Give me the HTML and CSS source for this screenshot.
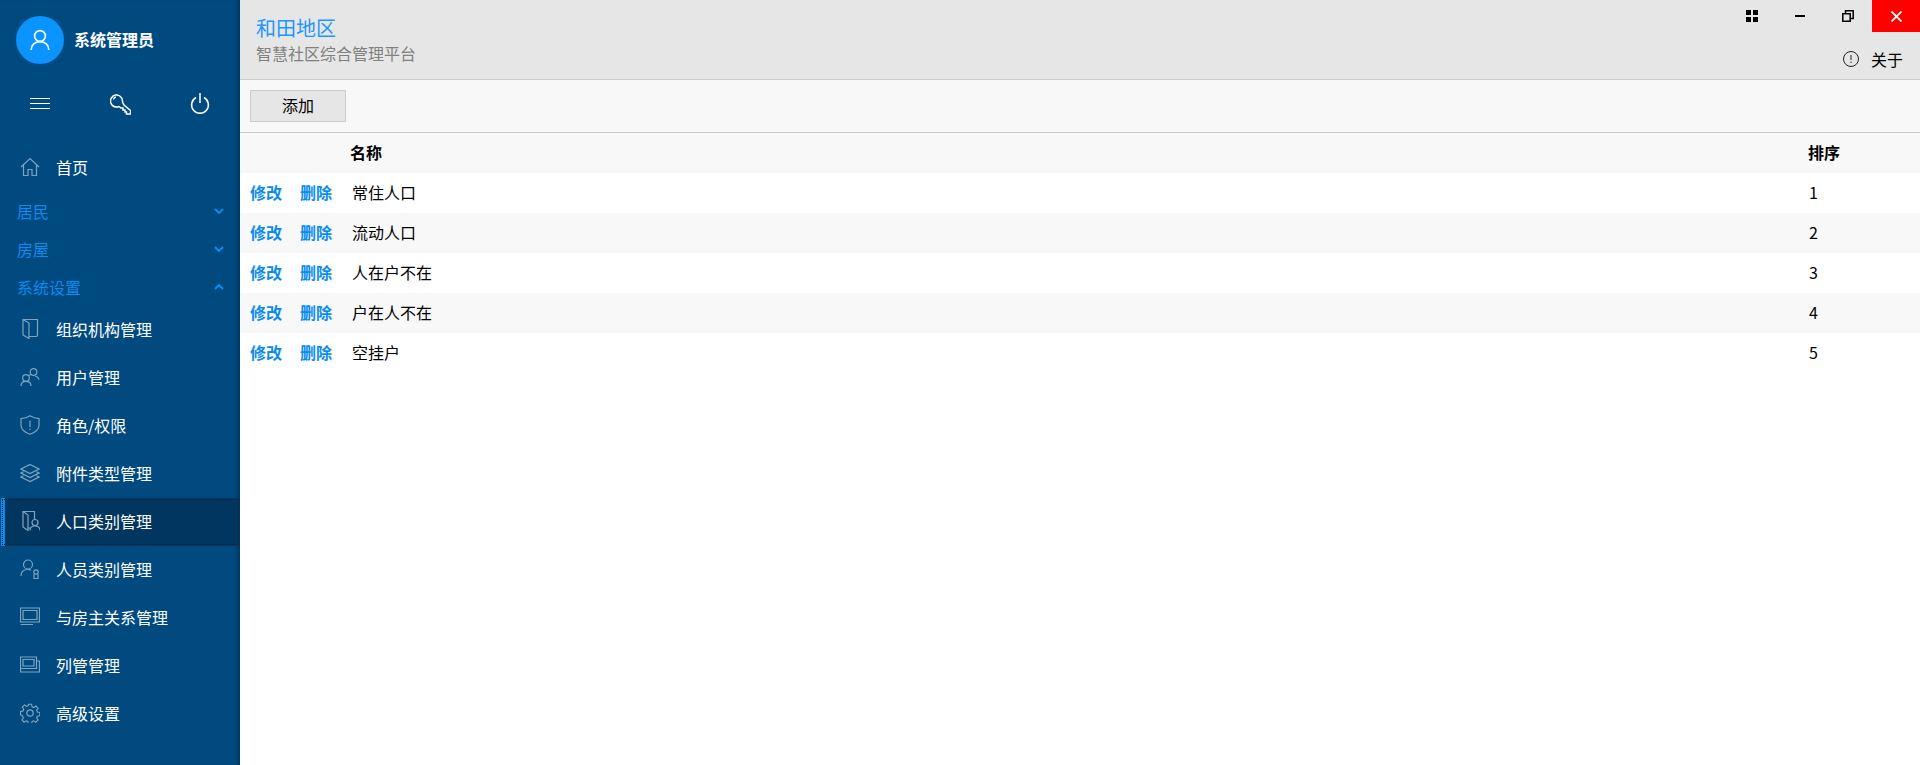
FILE: index.html
```html
<!DOCTYPE html>
<html lang="zh">
<head>
    <meta charset="UTF-8">
    <title>智慧社区综合管理平台</title>
    <link rel="stylesheet" href="styles.css">
</head>
<body>
    <div class="app">
        <aside class="sidebar">
            <div class="user">
                <div class="avatar">
                    <svg width="24" height="24" viewBox="0 0 24 24" fill="none" stroke="#fff" stroke-width="1.6"><circle cx="12" cy="8" r="5.4"/><path d="M3.2 22c0-5 3.6-8.4 8.8-8.4s8.8 3.4 8.8 8.4"/></svg>
                </div>
                <span class="user-name">系统管理员</span>
            </div>
            <div class="quick">
                <button class="quick-btn"><svg width="20" height="12" viewBox="0 0 20 12" stroke="#fff"><path d="M0 .5h20M0 5.5h20M0 10.5h20"/></svg></button>
                <button class="quick-btn"><svg width="21" height="21" viewBox="0 0 21 21" fill="none" stroke="#fff" stroke-width="1.5"><path d="M12.500 7a6 6 0 1 0-3.500 5.500l2 1.500h2v2h2v2h1.500v2h4v-3.500l-6.500-5.500c-.8-1-1.500-2.500-1.500-4z"/><path d="M3.500 5.500a3 3 0 0 1 2.500-2.500"/></svg></button>
                <button class="quick-btn"><svg width="20" height="22" viewBox="0 0 20 22" fill="none" stroke="#fff" stroke-width="1.5"><path d="M6 4.500a8.400 8.400 0 1 0 8 0"/><path d="M10 0v10"/></svg></button>
            </div>
            <nav class="menu">
                <a class="menu-item">
                    <svg class="menu-icon" viewBox="0 0 20 20"><path d="M1 10l9-8.500 9 8.500M3.500 8v10.500h4.500v-6h4v6h4.500V8"/></svg>
                    首页
                </a>
                <div class="menu-group">居民<svg class="chevron" viewBox="0 0 10 6"><path d="M1 1l4 4 4-4"/></svg></div>
                <div class="menu-group">房屋<svg class="chevron" viewBox="0 0 10 6"><path d="M1 1l4 4 4-4"/></svg></div>
                <div class="menu-group">系统设置<svg class="chevron" viewBox="0 0 10 6"><path d="M1 5l4-4 4 4"/></svg></div>
                <a class="menu-item">
                    <svg class="menu-icon" viewBox="0 0 20 20"><path d="M3 .5h14.500v15.500a1.500 1.500 0 0 1-1.500 1.500H9M3 .5v15.500l6 3.500V4L3 .5z"/></svg>
                    组织机构管理
                </a>
                <a class="menu-item">
                    <svg class="menu-icon" viewBox="0 0 20 20"><circle cx="13.500" cy="5" r="3.300"/><circle cx="6" cy="11" r="3.300"/><path d="M1 19c0-2.800 2-4.700 5-4.700s5 1.900 5 4.700M10.500 7.500l-1.500 1M15 9c2 .3 3.500 1.600 4 3.500"/></svg>
                    用户管理
                </a>
                <a class="menu-item">
                    <svg class="menu-icon" viewBox="0 0 20 20"><path d="M10 .8c2.500 1.700 5.500 2.600 9 2.800v6.400c0 4-3.500 7.300-9 9.200C4.500 17.300 1 14 1 10V3.600C4.500 3.400 7.500 2.500 10 .8z"/><path d="M10 5.500v6.500M10 13.500v1.500"/></svg>
                    角色/权限
                </a>
                <a class="menu-item">
                    <svg class="menu-icon" viewBox="0 0 20 20"><path d="M10 1.500l9 4.500-9 4.500L1 6l9-4.500z"/><path d="M3.500 8.800L1 10l9 4.500 9-4.500-2.500-1.200"/><path d="M3.500 12.800L1 14l9 4.500 9-4.500-2.500-1.200"/></svg>
                    附件类型管理
                </a>
                <a class="menu-item menu-item-active">
                    <svg class="menu-icon" viewBox="0 0 20 20"><path d="M3 .5h11.500v8M3 .5v15.500l5 3.500V4L3 .5zM8 17h2"/><circle cx="15" cy="11.500" r="3"/><path d="M10 19.500c0-2.800 2-4.500 5-4.500s5 1.700 5 4.500"/></svg>
                    人口类别管理
                </a>
                <a class="menu-item">
                    <svg class="menu-icon" viewBox="0 0 20 20"><circle cx="8" cy="5.500" r="4.500"/><path d="M1 17c0-4 2.800-6.500 7-6.500 1.200 0 2.200.2 3 .6"/><circle cx="16" cy="13" r="2.200"/><path d="M14 15v4.500h4V15"/></svg>
                    人员类别管理
                </a>
                <a class="menu-item">
                    <svg class="menu-icon" viewBox="0 0 20 20"><path d="M.5 1h19v14H.5zM3 3.500h14v9H3zM.5 17.500H13"/></svg>
                    与房主关系管理
                </a>
                <a class="menu-item">
                    <svg class="menu-icon" viewBox="0 0 20 20"><path d="M.5 2h16v11.500H.5zM3 4.500h11V11H3zM.5 13.500V17h19V6h-3"/></svg>
                    列管管理
                </a>
                <a class="menu-item">
                    <svg class="menu-icon" viewBox="0 0 20 20"><circle cx="10" cy="10" r="3.200"/><path d="M8.300.8h3.400l.5 2.700 1.700.7 2.300-1.500 2.300 2.400-1.500 2.200.7 1.700 2.700.5v3.400l-2.700.5-.7 1.700 1.500 2.300-2.400 2.300-2.200-1.500-1.700.7-.5 2.700H8.300l-.5-2.700-1.700-.7-2.300 1.500-2.300-2.400 1.500-2.200-.7-1.700L0 11.700V8.300l2.700-.5.700-1.700-1.500-2.300 2.400-2.300 2.200 1.500 1.700-.7z" transform="translate(.5 .5) scale(.95)"/></svg>
                    高级设置
                </a>
            </nav>
        </aside>
        <main class="content">
            <header class="top">
                <div class="titles">
                    <div class="region">和田地区</div>
                    <div class="platform">智慧社区综合管理平台</div>
                </div>
                <div class="top-right">
                    <div class="win-btns">
                        <button class="win-btn"><svg width="12" height="12" viewBox="0 0 12 12" fill="#000"><path d="M0 0h5v5H0zM7 0h5v5H7zM0 7h5v5H0zM7 7h5v5H7z"/></svg></button>
                        <button class="win-btn"><svg width="10" height="2" viewBox="0 0 10 2" fill="#000"><path d="M0 0h10v2H0z"/></svg></button>
                        <button class="win-btn"><svg width="12" height="12" viewBox="0 0 12 12" fill="none" stroke="#000" stroke-width="1.500"><path d="M.8 3.800h7.400v7.400H.8zM3.500 3.500V.8h7.700v7.700H8.500"/></svg></button>
                        <button class="win-btn win-close"><svg width="11" height="11" viewBox="0 0 11 11" stroke="#fff" stroke-width="1.800"><path d="M.5.500l10 10M10.500.500l-10 10"/></svg></button>
                    </div>
                    <div class="about">
                        <svg width="16" height="16" viewBox="0 0 16 16" fill="none" stroke="#222"><circle cx="8" cy="8" r="7.500"/><path d="M8 4v5M8 10.500V12"/></svg>
                        <span>关于</span>
                    </div>
                </div>
            </header>
            <div class="toolbar">
                <button class="add-btn">添加</button>
            </div>
            <table class="grid">
                <thead>
                    <tr>
                        <th class="col-actions"></th>
                        <th class="col-name">名称</th>
                        <th class="col-sort">排序</th>
                    </tr>
                </thead>
                <tbody>
                    <tr><td class="actions"><a>修改</a><a>删除</a></td><td class="name">常住人口</td><td class="sort">1</td></tr>
                    <tr><td class="actions"><a>修改</a><a>删除</a></td><td class="name">流动人口</td><td class="sort">2</td></tr>
                    <tr><td class="actions"><a>修改</a><a>删除</a></td><td class="name">人在户不在</td><td class="sort">3</td></tr>
                    <tr><td class="actions"><a>修改</a><a>删除</a></td><td class="name">户在人不在</td><td class="sort">4</td></tr>
                    <tr><td class="actions"><a>修改</a><a>删除</a></td><td class="name">空挂户</td><td class="sort">5</td></tr>
                </tbody>
            </table>
        </main>
    </div>
</body>
</html>
```

FILE: styles.css
```css
* {
    box-sizing: border-box;
}
html, body {
    height: 100%;
}
body {
    margin: 0;
    background: #fff;
    color: #000;
    font-family: "Noto Sans CJK SC", "Liberation Sans", sans-serif;
    font-size: 16px;
    overflow: hidden;
}
button {
    font-family: inherit;
    border: none;
    background: none;
    padding: 0;
}
.app {
    display: flex;
    height: 765px;
}
.sidebar {
    width: 240px;
    flex-shrink: 0;
    background: #004a80;
    box-shadow: inset -5px 0 5px -3px rgba(0,0,0,0.3);
}
.user {
    display: flex;
    align-items: center;
    padding: 16px 0 0 16px;
    height: 64px;
}
.avatar {
    width: 48px;
    height: 48px;
    border-radius: 50%;
    background: #0a94ff;
    display: flex;
    align-items: center;
    justify-content: center;
}
.user-name {
    margin: -2px 0 0 10px;
    color: #fff;
    font-weight: bold;
    line-height: 48px;
}
.quick {
    display: grid;
    grid-template-columns: repeat(3, 80px);
    height: 48px;
    margin-top: 16px;
}
.quick-btn {
    display: flex;
    align-items: center;
    justify-content: center;
}
.menu {
    margin-top: 16px;
}
.menu-item {
    display: flex;
    align-items: center;
    height: 48px;
    padding: 0 0 2px 20px;
    color: #fff;
}
.menu-icon {
    width: 20px;
    height: 20px;
    margin-right: 16px;
    fill: none;
    stroke: #7fa4bf;
    stroke-width: 1.2;
}
.menu-item-active {
    background: #003660;
    border-left: 4px solid #0a8cf0;
    margin-left: 1px;
    padding-left: 15px;
    outline: 1px dotted #0b2540;
    outline-offset: -2px;
}
.menu-group {
    display: flex;
    align-items: center;
    justify-content: space-between;
    height: 38px;
    padding: 0 16px 0 17px;
    color: #0a8cf0;
}
.chevron {
    width: 10px;
    height: 6px;
    fill: none;
    stroke: #0a8cf0;
    stroke-width: 2;
}
.content {
    flex: 1;
    min-width: 0;
}
.top {
    display: flex;
    justify-content: space-between;
    height: 80px;
    background: #e6e6e6;
    border-bottom: 1px solid #ccc;
}
.titles {
    padding: 13px 0 0 16px;
}
.region {
    color: #1e96ff;
    font-size: 20px;
    line-height: 29px;
}
.platform {
    color: #808080;
    line-height: 23px;
}
.win-btns {
    display: flex;
}
.win-btn {
    width: 48px;
    height: 32px;
    display: flex;
    align-items: center;
    justify-content: center;
}
.win-close {
    background: #f00;
}
.about {
    display: flex;
    align-items: center;
    height: 24px;
    margin-top: 15px;
    padding-left: 115px;
    font-size: 16px;
}
.about span {
    margin-left: 12px;
}
.toolbar {
    height: 53px;
    padding: 10px 0 0 10px;
    background: #f8f8f8;
    border-bottom: 1px solid #ccc;
}
.add-btn {
    width: 96px;
    height: 32px;
    padding-bottom: 2px;
    background: #e6e6e6;
    border: 1px solid #ccc;
    font-size: 16px;
    color: #000;
}
.grid {
    width: 100%;
    border-collapse: collapse;
    table-layout: fixed;
}
.grid th {
    height: 40px;
    background: #f8f8f8;
    text-align: left;
    padding: 0 0 2px 0;
}
.grid td {
    height: 40px;
    padding: 0 0 3px 0;
    line-height: 20px;
}
.grid tbody tr:nth-child(even) td {
    background: #f8f8f8;
}
.col-actions {
    width: 110px;
}
.col-sort {
    width: 113px;
    padding-left: 1px !important;
}
.actions {
    padding-left: 10px !important;
    font-weight: bold;
    color: #0a8cf0;
    white-space: nowrap;
}
.actions a {
    margin-right: 18px;
}
.name {
    padding-left: 2px !important;
}
.sort {
    padding-left: 2px !important;
}
```
